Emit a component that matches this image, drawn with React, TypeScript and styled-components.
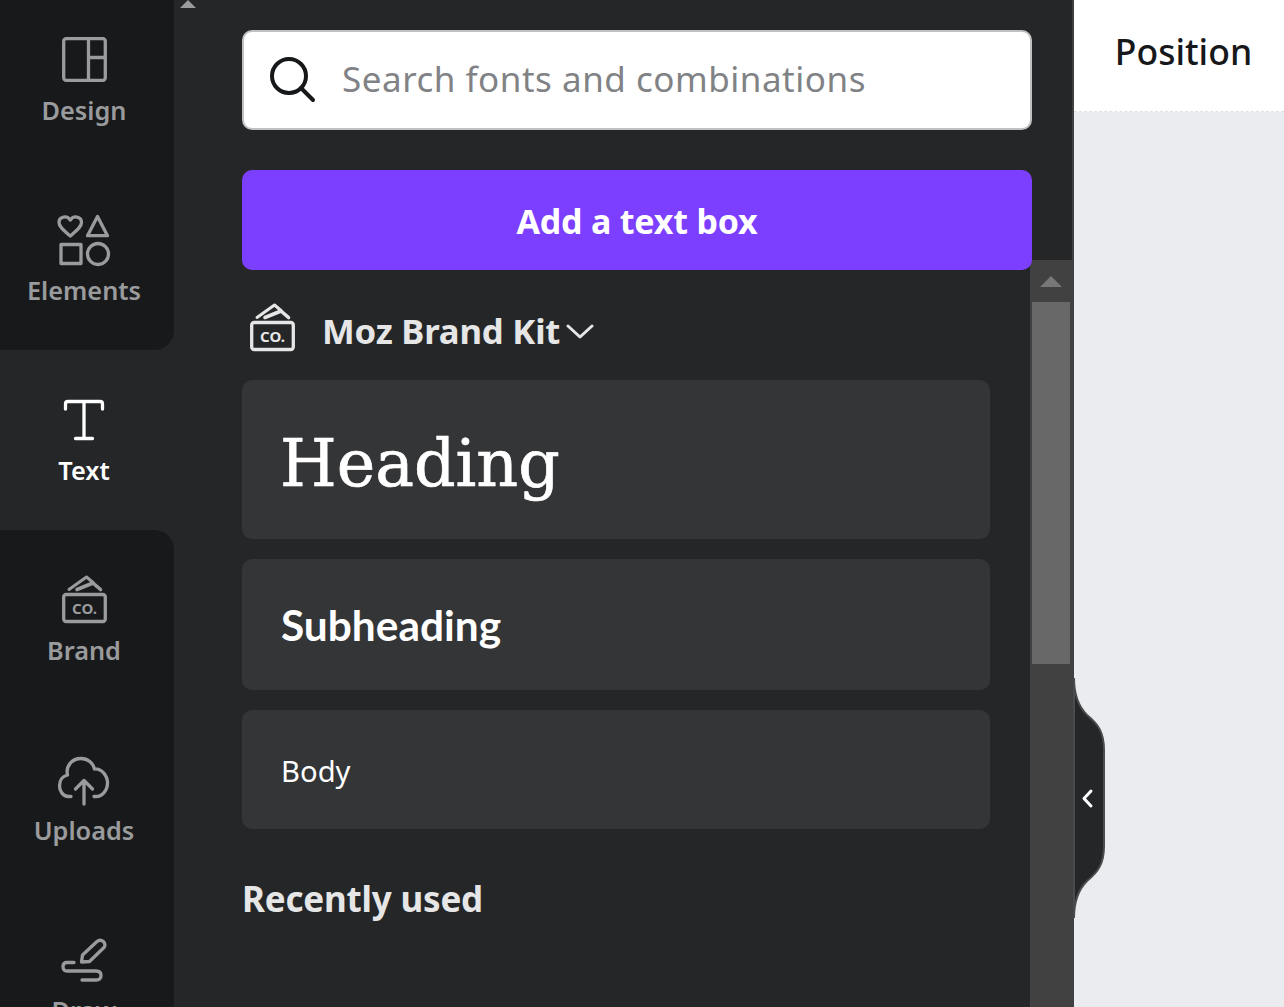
import React from "react";
import styled, { createGlobalStyle } from "styled-components";

const Global = createGlobalStyle`
  html, body { margin: 0; padding: 0; background: #ebecf0; }
  * { box-sizing: border-box; }
`;

const Page = styled.div`
  position: relative;
  display: flex;
  width: 1284px;
  height: 1007px;
  overflow: hidden;
  font-family: "Noto Sans", sans-serif;
`;

const Rail = styled.nav`
  position: relative;
  flex: 0 0 174px;
  display: flex;
  flex-direction: column;
  margin-top: -10px;
  background: #252627;
`;

const RailGroup = styled.div<{ $corner: "top" | "bottom" }>`
  flex: none;
  background: #18191b;
  border-${(p) => (p.$corner === "top" ? "top" : "bottom")}-right-radius: 20px;
`;

const RailItem = styled.div<{ $active?: boolean }>`
  flex: none;
  height: 180px;
  display: flex;
  flex-direction: column;
  align-items: center;
  padding: 44px 6px 0 0;
  color: ${(p) => (p.$active ? "#ffffff" : "#9a9b9c")};
`;

const RailIcon = styled.svg`
  display: block;
  flex: none;
  width: 56px;
  height: 56px;
  fill: none;
  stroke: currentColor;
  stroke-width: 3.3;
  stroke-linecap: round;
  stroke-linejoin: round;
`;

const RailLabel = styled.span`
  margin-top: 3px;
  font-size: 25.3px;
  font-weight: 600;
  line-height: 34px;
  white-space: nowrap;
`;

const Panel = styled.section`
  position: relative;
  flex: 0 0 900px;
  min-width: 0;
  display: flex;
  background: #252627;
  border-right: 2px solid #3f4041;
`;

const PanelArrow = styled.svg`
  position: absolute;
  left: 6px;
  top: 0;
  width: 16px;
  height: 8px;
  fill: #9a9b9c;
`;

const Content = styled.div`
  position: relative;
  z-index: 1;
  flex: 1;
  min-width: 0;
  padding: 30px 0 0 68px;
`;

const SearchBox = styled.div`
  display: flex;
  align-items: center;
  width: 790px;
  height: 100px;
  padding-left: 24px;
  background: #ffffff;
  border: 2px solid #bfc0c2;
  border-radius: 10px;
`;

const SearchIcon = styled.svg`
  flex: none;
  width: 50px;
  height: 50px;
  fill: none;
  stroke: #16181a;
  stroke-width: 4;
  stroke-linecap: round;
`;

const Placeholder = styled.span`
  margin: -4px 0 0 24px;
  font-size: 35px;
  letter-spacing: 0.52px;
  color: #808285;
  white-space: nowrap;
`;

const AddButton = styled.div`
  display: flex;
  align-items: center;
  justify-content: center;
  width: 790px;
  height: 100px;
  margin-top: 40px;
  padding-top: 2px;
  border-radius: 10px;
  background: #7d3fff;
  color: #ffffff;
  font-size: 34px;
  font-weight: 700;
  letter-spacing: -0.2px;
`;

const BrandRow = styled.div`
  display: flex;
  align-items: center;
  height: 110px;
  padding: 10px 0 0 2px;
  color: #e6e6e7;
`;

const BrandIcon = styled.svg`
  flex: none;
  width: 56px;
  height: 56px;
  fill: none;
  stroke: currentColor;
  stroke-width: 3.3;
  stroke-linecap: round;
  stroke-linejoin: round;
`;

const BrandName = styled.span`
  margin-left: 22px;
  font-size: 34.7px;
  font-weight: 700;
  letter-spacing: -0.2px;
  white-space: nowrap;
`;

const Chevron = styled.svg`
  margin: 2px 0 0 6px;
  width: 28px;
  height: 16px;
  fill: none;
  stroke: currentColor;
  stroke-width: 3;
  stroke-linecap: round;
  stroke-linejoin: round;
`;

const Card = styled.div<{ $height: number }>`
  display: flex;
  align-items: center;
  width: 748px;
  height: ${(p) => p.$height}px;
  margin-bottom: 20px;
  padding-left: 40px;
  background: #333537;
  border-radius: 10px;
  color: #ffffff;
`;

const HeadingText = styled.span`
  margin: 8px 0 0 -2px;
  font-family: "DejaVu Serif", serif;
  font-size: 65px;
  -webkit-text-stroke: 0.7px #ffffff;
`;

const SubheadingText = styled.span`
  margin-left: -1px;
  font-family: "Lato", sans-serif;
  font-size: 42.4px;
  font-weight: 700;
`;

const BodyText = styled.span`
  margin: 2px 0 0 -1px;
  font-size: 29.2px;
`;

const SectionTitle = styled.h2`
  margin: 46px 0 0 0;
  font-size: 35px;
  font-weight: 700;
  letter-spacing: -0.2px;
  color: #e6e6e7;
`;

const ScrollTrack = styled.div`
  flex: 0 0 42px;
  margin-top: 260px;
  display: flex;
  flex-direction: column;
  align-items: center;
  background: #414141;
`;

const ScrollArrow = styled.svg`
  flex: none;
  margin-top: 16px;
  width: 22px;
  height: 11px;
  fill: #777777;
`;

const ScrollThumb = styled.div`
  flex: none;
  width: 38px;
  height: 362px;
  margin-top: 15px;
  background: #686868;
`;

const Aside = styled.aside`
  flex: 1;
  min-width: 0;
`;

const AsideHeader = styled.div`
  display: flex;
  align-items: center;
  justify-content: center;
  height: 112px;
  padding: 0 0 10px 9px;
  background: #ffffff;
  border-bottom: 1px dashed #dfe0e3;
  font-size: 35.5px;
  font-weight: 500;
  color: #16181a;
`;

const Handle = styled.svg`
  position: absolute;
  left: 1073px;
  top: 678px;
  width: 34px;
  height: 240px;
`;

const BrandCo = styled.text`
  font-size: 15px;
  font-weight: 700;
  fill: currentColor;
  stroke: none;
`;

const brandGlyph = (
  <>
    <rect x="7.7" y="20.5" width="41.6" height="27" rx="2.5" />
    <path d="M13 15.500L30.500 3L37 8.500" strokeWidth="3" />
    <path d="M21 15.500L37 9L44.500 15.500" strokeWidth="3.6" />
    <BrandCo x="28.500" y="39.500" textAnchor="middle">CO.</BrandCo>
  </>
);

export default function App() {
  return (
    <Page>
      <Global />
      <Rail>
        <RailGroup $corner="bottom">
          <RailItem>
            <RailIcon viewBox="0 0 56 56">
              <rect x="7.700" y="4.700" width="41.600" height="41.600" rx="2.500" />
              <path d="M32.500 4.700V46.300M32.500 23.500H49.300" />
            </RailIcon>
            <RailLabel>Design</RailLabel>
          </RailItem>
          <RailItem>
            <RailIcon viewBox="0 0 56 56">
              <path d="M14.300 22C8.500 17 3 13 3 8.500C3 2.500 11 1 14.300 6C17.500 1 25.500 2.500 25.500 8.500C25.500 13 20 17 14.300 22Z" />
              <path d="M41.500 2.500L51.500 21.700H31.500Z" />
              <rect x="5" y="30.500" width="20" height="19" />
              <circle cx="42" cy="40" r="10.500" />
            </RailIcon>
            <RailLabel>Elements</RailLabel>
          </RailItem>
        </RailGroup>
        <RailItem $active>
          <RailIcon viewBox="0 0 56 56">
            <path d="M9.500 15V10Q9.500 7.500 12 7.500H44Q46.500 7.500 46.500 10V15M28 7.500V44.500M19.500 44.500H36.500" />
          </RailIcon>
          <RailLabel>Text</RailLabel>
        </RailItem>
        <RailGroup $corner="top">
          <RailItem>
            <RailIcon viewBox="0 0 56 56">{brandGlyph}</RailIcon>
            <RailLabel>Brand</RailLabel>
          </RailItem>
          <RailItem>
            <RailIcon viewBox="0 0 56 56">
              <path d="M15 42.500H12.500C7 42.500 3.500 37 3.500 32C3.500 26 7 22 11.500 21C9.500 12 16 4.500 25 4.500C32 4.500 37 9 38.500 15C46 14.500 51.500 22 51.500 29C51.500 36.500 46 42.500 40 42.500H38" />
              <path d="M28 50V26.500M19.500 35L28 26.500L36.500 35" />
            </RailIcon>
            <RailLabel>Uploads</RailLabel>
          </RailItem>
          <RailItem>
            <RailIcon viewBox="0 0 56 56">
              <path d="M25.500 28L26.500 21L41 7.500Q44 5 47.500 7.500Q50 10.500 48 13.500L33.500 27.500Z" />
              <path d="M18 28.500H11Q7 28.500 7 32.500Q7 37 11 37H40Q45 37 45 41.500Q45 46 40 46H26" />
            </RailIcon>
            <RailLabel>Draw</RailLabel>
          </RailItem>
        </RailGroup>
      </Rail>
      <Panel>
        <PanelArrow viewBox="0 0 16 8">
          <path d="M8 0L16 8H0Z" />
        </PanelArrow>
        <Content>
          <SearchBox>
            <SearchIcon viewBox="0 0 50 50">
              <circle cx="21" cy="21" r="17" />
              <path d="M33 33L45 45" />
            </SearchIcon>
            <Placeholder>Search fonts and combinations</Placeholder>
          </SearchBox>
          <AddButton>Add a text box</AddButton>
          <BrandRow>
            <BrandIcon viewBox="0 0 56 56">{brandGlyph}</BrandIcon>
            <BrandName>Moz Brand Kit</BrandName>
            <Chevron viewBox="0 0 28 16">
              <path d="M2 3L14 14L26 3" />
            </Chevron>
          </BrandRow>
          <Card $height={159}>
            <HeadingText>Heading</HeadingText>
          </Card>
          <Card $height={131}>
            <SubheadingText>Subheading</SubheadingText>
          </Card>
          <Card $height={119}>
            <BodyText>Body</BodyText>
          </Card>
          <SectionTitle>Recently used</SectionTitle>
        </Content>
        <ScrollTrack>
          <ScrollArrow viewBox="0 0 22 11">
            <path d="M11 0L22 11H0Z" />
          </ScrollArrow>
          <ScrollThumb />
        </ScrollTrack>
      </Panel>
      <Aside>
        <AsideHeader>Position</AsideHeader>
      </Aside>
      <Handle viewBox="0 0 34 240">
        <path d="M1 0C1 10 3 26 14 37C25 46 31 54 31 72V168C31 186 25 194 14 203C3 214 1 230 1 240Z" fill="#252627" stroke="#4a4b4c" strokeWidth="2" />
        <path d="M18 113L11 120.500L18 128" fill="none" stroke="#ffffff" strokeWidth="3" strokeLinecap="round" strokeLinejoin="round" />
      </Handle>
    </Page>
  );
}
